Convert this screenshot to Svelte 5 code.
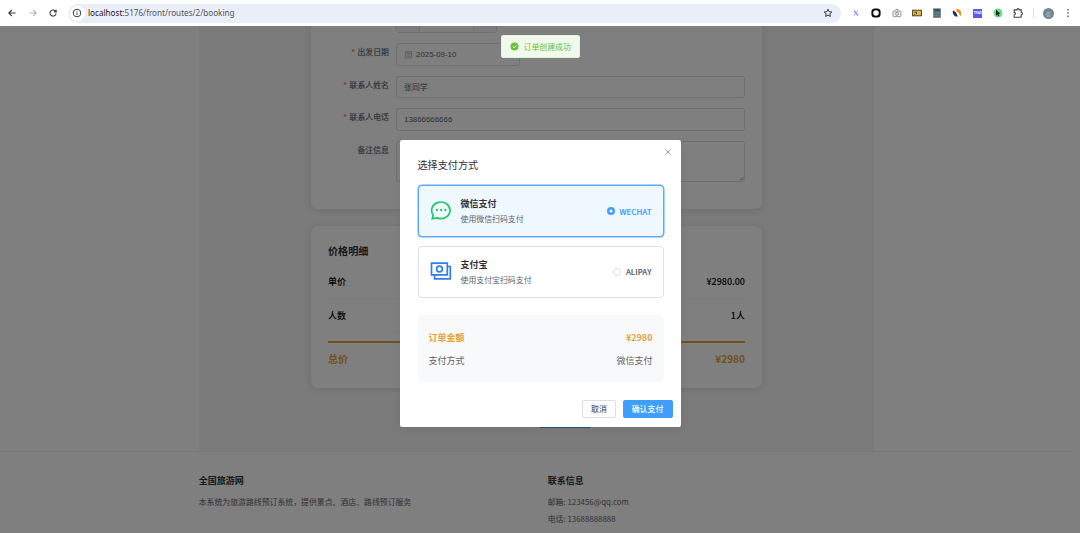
<script lang="ts">
type Payment = { id: string; name: string; hint: string };

const payments: Payment[] = [
  { id: 'WECHAT', name: '微信支付', hint: '使用微信扫码支付' },
  { id: 'ALIPAY', name: '支付宝', hint: '使用支付宝扫码支付' },
];

const fields = [
  { label: '联系人姓名', value: '张同学' },
  { label: '联系人电话', value: '13866666666' },
];

let selected = $state('WECHAT');
const selectedName = $derived(payments.find((p) => p.id === selected)?.name);
</script>

<div class="browser">
	<header class="toolbar">
		<nav class="nav">
			<svg viewBox="0 0 10 10"><path d="M8.5 5H1.8M4.8 2 1.8 5l3 3" /></svg>
			<svg class="faded" viewBox="0 0 10 10"><path d="M1.5 5h6.7M5.2 2l3 3-3 3" /></svg>
			<svg viewBox="0 0 10 10"><path d="M7.8 3.6A3.1 3.1 0 1 0 8.1 5.6M8.2 1.7v2.2H6" /></svg>
		</nav>
		<div class="address">
			<span class="info">
				<svg viewBox="0 0 10 10"><circle cx="5" cy="5" r="3.8" /><path d="M5 4.6v2.3M5 2.8v.9" /></svg>
			</span>
			<span class="url"><b>localhost:</b>5176/front/routes/2/booking</span>
			<svg class="star" viewBox="0 0 10 10"><path d="m5 1.2 1.1 2.5 2.8.3-2.1 1.8.6 2.7L5 7.1 2.6 8.5l.6-2.7L1.1 4l2.8-.3z" /></svg>
		</div>
		<div class="extensions">
			<svg viewBox="0 0 12 12"><path d="M4 3.7 8 8.5" stroke="#7d8ff0" stroke-width="1.3" /><path d="M8 3.7 6.3 5.6" stroke="#45c5c9" /><path d="M5.5 6.8 4 8.5" stroke="#b66be0" /></svg>
			<svg viewBox="0 0 12 12"><rect x="1.4" y="1.4" width="9.2" height="9.2" rx="3.5" fill="#0a0a0a" /><circle cx="6" cy="6" r="2.8" fill="#fff" /></svg>
			<svg viewBox="0 0 12 12"><rect x="2" y="4" width="8" height="5.6" rx=".7" stroke="#999" fill="#eee" /><path d="M4.4 3.4 5 2.3h2l.6 1.1" stroke="#999" /><circle cx="6" cy="6.7" r="1.5" stroke="#888" /></svg>
			<svg viewBox="0 0 12 12"><rect x="1.6" y="3.2" width="8.8" height="5.6" fill="#e9b93c" stroke="#4b4330" /><path d="M3.5 5.2h2v2M3.2 7.4h1" stroke="#4b4330" /></svg>
			<svg viewBox="0 0 12 12"><rect x="2.2" y="1.4" width="7.6" height="9.4" fill="#546b79" /><path d="M3.3 3.2h5.4" stroke="#35434d" stroke-width="1.4" /><path d="M3.3 6h5.4M3.3 8.6h3" stroke="#8fa0aa" stroke-dasharray="1 1" /><path d="M7.5 8.8h1.4" stroke="#c65b4c" /></svg>
			<svg viewBox="0 0 12 12"><path d="M2 3.2l3 2.3 1.8 4C3.9 10.3 1 7 2 3.2z" fill="#20285c" /><path d="M5.3 2c3.7-.8 6.5 3.500 4 7.200L7.600 5.800 5.500 4.500z" fill="#f48b17" /></svg>
			<span class="tag">TRAX</span>
			<svg viewBox="0 0 12 12"><circle cx="6" cy="6" r="4.5" fill="#6edb93" /><path d="m4 2.7 4.4 4.2-2 .2 1 2-1 .5-1-2-1.4 1.2z" fill="#152218" /></svg>
			<svg viewBox="0 0 12 12"><path d="M2.2 2.9H5c0-1.7 2.2-1.7 2.2 0h2v2.6c1.7 0 1.7 2.2 0 2.2v2.6h-7V7.8c1.7 0 1.7-2.4 0-2.4z" stroke="#444" stroke-width="1.1" /></svg>
		</div>
		<i class="divider"></i>
		<span class="avatar">倍</span>
		<svg class="dots" viewBox="0 0 4 12"><circle cx="2" cy="2.8" r=".8" /><circle cx="2" cy="6" r=".8" /><circle cx="2" cy="9.2" r=".8" /></svg>
	</header>

	<div class="viewport">
		<main>
			<section class="card form">
				<div class="row">
					<span class="label"></span>
					<div class="stepper"><i></i><b></b><i></i></div>
				</div>
				<div class="row">
					<span class="label required">出发日期</span>
					<div class="input date">
						<svg viewBox="0 0 10 10"><path d="M1.5 2h7v6.8h-7zM1.5 4h7M3.3 1v1.6M6.7 1v1.6M3.2 5.6h3.6M3.2 7.2h3.6" /></svg>
						2025-09-10
					</div>
				</div>
				{#each fields as field}
					<div class="row">
						<span class="label required">{field.label}</span>
						<div class="input">{field.value}</div>
					</div>
				{/each}
				<div class="row">
					<span class="label">备注信息</span>
					<div class="input textarea">
						<svg viewBox="0 0 6 6"><path d="M1 5.5 5.5 1M3.5 5.5l2-2" /></svg>
					</div>
				</div>
			</section>

			<section class="card price">
				<h3>价格明细</h3>
				<div class="price-row"><span>单价</span><span>¥2980.00</span></div>
				<div class="price-row"><span>人数</span><span>1人</span></div>
				<div class="price-row total"><span>总价</span><span>¥2980</span></div>
			</section>
			<button type="button" class="submit" aria-label="提交订单"></button>
		</main>

		<footer>
			<div class="footer-inner">
				<div>
					<h4>全国旅游网</h4>
					<p>本系统为旅游路线预订系统，提供景点、酒店、路线预订服务</p>
				</div>
				<div>
					<h4>联系信息</h4>
					<p>邮箱: 123456@qq.com</p>
					<p>电话: 13688888888</p>
				</div>
			</div>
		</footer>

		<div class="overlay">
			<div class="dialog" role="dialog" aria-modal="true">
				<button type="button" class="close" aria-label="关闭">
					<svg viewBox="0 0 8 8"><path d="m1.3 1.3 5.4 5.4M6.7 1.3 1.3 6.7" /></svg>
				</button>
				<h2>选择支付方式</h2>
				<div class="options">
					{#each payments as payment}
						<button
							type="button"
							class="option"
							class:active={selected === payment.id}
							onclick={() => (selected = payment.id)}
						>
							{#if payment.id === 'WECHAT'}
								<svg class="brand wechat" viewBox="0 0 22 22">
									<path d="M2.3 18.700l.9-3.700A9.200 8.300 0 1 1 7 17.900z" />
									<circle cx="7" cy="10" r="1.15" /><circle cx="11.2" cy="10" r="1.15" /><circle cx="15.4" cy="10" r="1.15" />
								</svg>
							{:else}
								<svg class="brand alipay" viewBox="0 0 22 22">
									<path d="M1.500 2.200h15.800v11.600H1.500zM17.300 5.500h3v12.300H4.600v-4" />
									<circle cx="9.500" cy="8" r="2.9" />
								</svg>
							{/if}
							<span class="about">
								<strong>{payment.name}</strong>
								<small>{payment.hint}</small>
							</span>
							<i class="radio"></i>
							<span class="code">{payment.id}</span>
						</button>
					{/each}
				</div>
				<div class="summary">
					<div class="amount"><span>订单金额</span><span>¥2980</span></div>
					<div><span>支付方式</span><span>{selectedName}</span></div>
				</div>
				<div class="actions">
					<button type="button" class="btn">取消</button>
					<button type="button" class="btn primary">确认支付</button>
				</div>
			</div>
		</div>

		<div class="toast" role="status">
			<svg viewBox="0 0 10 10"><circle cx="5" cy="5" r="4.4" /><path d="m3 5.1 1.5 1.4L7.1 3.8" /></svg>
			订单创建成功
		</div>
	</div>
</div>

<style>
	:global(body) {
		margin: 0;
	}

	.browser {
		height: 533px;
		display: flex;
		flex-direction: column;
		overflow: hidden;
		font-family: 'Noto Sans CJK SC', sans-serif;
		font-size: 7.9px;
		color: #303133;
	}

	.browser * {
		box-sizing: border-box;
	}

	svg {
		display: block;
		flex: none;
		fill: none;
		stroke: currentColor;
	}

	button {
		font: inherit;
		color: inherit;
		padding: 0;
		margin: 0;
	}

	h2,
	h3,
	h4,
	p {
		margin: 0;
	}

	/* Browser toolbar */
	.toolbar {
		height: 26px;
		flex: none;
		display: flex;
		align-items: center;
		background: #fff;
		color: #3c3d40;
	}

	.nav {
		display: flex;
		gap: 10.5px;
		width: 68px;
		padding-left: 7px;
	}

	.nav svg {
		width: 10px;
		height: 10px;
		stroke-width: 1.1;
	}

	.nav .faded {
		color: #b4b6b9;
	}

	.address {
		width: 773px;
		height: 19px;
		border-radius: 10px;
		background: #e9eef9;
		display: flex;
		align-items: center;
		padding: 0 8px 0 1.5px;
	}

	.info {
		width: 15px;
		height: 15px;
		border-radius: 50%;
		background: #fff;
		display: grid;
		place-items: center;
		margin-right: 3.5px;
	}

	.info svg,
	.star {
		width: 10px;
		height: 10px;
	}

	.url {
		flex: 1;
		font: 8.15px/12px 'Noto Sans', sans-serif;
		color: #55575b;
	}

	.url b {
		font-weight: 400;
		color: #1f2023;
	}

	.extensions {
		display: flex;
		align-items: center;
		gap: 8.3px;
		margin-left: 9px;
	}

	.extensions svg {
		width: 12px;
		height: 12px;
		stroke: none;
	}

	.tag {
		width: 9px;
		height: 9px;
		margin: 0 1.5px;
		background: #6257f5;
		color: #fff;
		font: 700 3px/9px 'Liberation Sans', sans-serif;
		text-align: center;
	}

	.divider {
		width: 1px;
		height: 9px;
		margin-left: 8.5px;
		background: #d3dff5;
	}

	.avatar {
		width: 11px;
		height: 11px;
		margin: 0 12px 0 9px;
		border-radius: 50%;
		background: #708690;
		color: #c5d0d4;
		font-size: 5px;
		line-height: 11px;
		text-align: center;
	}

	.dots {
		width: 4px;
		height: 12px;
		fill: #3c3d40;
		stroke: none;
	}

	/* Page, with the scrollbar gutter on the right */
	.viewport {
		position: relative;
		flex: 1;
		overflow: hidden;
		padding-right: 7px;
		background: #fff;
	}

	main {
		width: 675px;
		height: 425px;
		margin: 0 auto;
		padding: 0 112px;
		background: #f4f4f5;
		overflow: hidden;
	}

	.card {
		width: 451px;
		background: #fff;
		border-radius: 7px;
		box-shadow: 0 1px 7px rgba(0, 0, 0, 0.1);
		padding: 17px;
	}

	.form {
		height: 215.5px;
		margin-top: -32.5px;
		display: flex;
		flex-direction: column;
		gap: 10.1px;
	}

	.row {
		display: flex;
		min-height: 22.5px;
	}

	.label {
		width: 68px;
		padding-right: 7px;
		line-height: 18.5px;
		text-align: right;
		color: #606266;
		-webkit-text-stroke: 0.15px currentColor;
	}

	.required::before {
		content: '*';
		color: #f56c6c;
		margin-right: 2.5px;
	}

	.input {
		flex: 1;
		display: flex;
		align-items: center;
		height: 22.5px;
		border: 1px solid #dcdfe6;
		border-radius: 2.5px;
		padding: 0 7px;
		font-family: 'Liberation Sans', 'Noto Sans CJK SC', sans-serif;
		color: #606266;
	}

	.date {
		flex: none;
		width: 124px;
		gap: 3px;
	}

	.date svg {
		width: 9px;
		height: 9px;
		stroke: #a8abb2;
		stroke-width: 0.8;
	}

	.textarea {
		height: 41px;
		padding: 0;
		align-items: flex-end;
		justify-content: flex-end;
	}

	.textarea svg {
		width: 5px;
		height: 5px;
		stroke-width: 0.7;
	}

	.stepper {
		display: flex;
		width: 101px;
		height: 22.5px;
		border: 1px solid #dcdfe6;
		border-radius: 2.5px;
	}

	.stepper i {
		width: 22px;
		background: #f5f7fa;
	}

	.stepper b {
		flex: 1;
		border: solid #dcdfe6;
		border-width: 0 1px;
	}

	.price {
		height: 162.5px;
		margin-top: 16.5px;
	}

	.price h3 {
		font-size: 10.1px;
		line-height: 16px;
		font-weight: 600;
		margin-bottom: 7px;
	}

	.price-row {
		display: flex;
		justify-content: space-between;
		align-items: center;
		height: 33.7px;
		font-size: 9px;
		font-weight: 500;
		color: #000;
		border-bottom: 1px solid #f8f8f8;
	}

	.price-row.total {
		height: 34px;
		margin-top: 8px;
		border-top: 2px solid #e6a23c;
		border-bottom: none;
		font-size: 10.1px;
		font-weight: 700;
		color: #e6a23c;
	}

	.submit {
		display: block;
		width: 52px;
		height: 23px;
		margin: 17px 0 0 228px;
		border: none;
		border-radius: 2px;
		background: #409eff;
	}

	footer {
		height: 90px;
		border-top: 1px solid #f0f0f0;
		background: #fff;
	}

	.footer-inner {
		width: 675.5px;
		margin: 0 auto;
		display: grid;
		grid-template-columns: 1fr 1fr;
		gap: 22.5px;
		padding-top: 21px;
	}

	h4 {
		font-size: 9px;
		line-height: 16px;
		font-weight: 700;
		margin-bottom: 4px;
	}

	footer p {
		font-size: 7.88px;
		line-height: 17px;
		color: #606266;
	}

	/* Payment dialog */
	.overlay {
		position: absolute;
		inset: 0;
		background: rgba(0, 0, 0, 0.5);
	}

	.dialog {
		position: relative;
		width: 281px;
		height: 287px;
		margin: 113.5px 0 0 400px;
		padding: 16.5px 17.5px 9px;
		border-radius: 2px;
		background: #fff;
		box-shadow: 0 2px 8px rgba(0, 0, 0, 0.06);
	}

	.close {
		position: absolute;
		top: 8.5px;
		right: 9.5px;
		border: none;
		background: none;
		color: #909399;
	}

	.close svg {
		width: 8px;
		height: 8px;
		stroke-width: 0.9;
	}

	h2 {
		font-size: 10.15px;
		line-height: 18px;
		font-weight: 400;
		color: #303133;
	}

	.options {
		display: grid;
		gap: 8.5px;
		margin-top: 11px;
	}

	.option {
		display: flex;
		align-items: center;
		height: 52px;
		padding: 0 11px;
		border: 1px solid #dfe1e6;
		border-radius: 4px;
		background: #fff;
		text-align: left;
	}

	.option.active {
		border-color: #5aabff;
		background: #f0f8ff;
		box-shadow: 0 0 0 0.5px #5aabff;
	}

	.brand {
		width: 22px;
		height: 22px;
		stroke-width: 1.7;
		margin-right: 9px;
	}

	.wechat {
		color: #20c76b;
	}

	.wechat circle {
		fill: currentColor;
		stroke: none;
	}

	.alipay {
		color: #2f7df6;
	}

	.about {
		flex: 1;
		display: flex;
		flex-direction: column;
		line-height: 15px;
	}

	.about strong {
		font-size: 9px;
		color: #303133;
	}

	.about small {
		font-size: 7.9px;
		color: #606266;
	}

	.radio {
		width: 8px;
		height: 8px;
		margin-right: 4.5px;
		border: 1px solid #dcdfe6;
		border-radius: 50%;
	}

	.active .radio {
		border: none;
		background: radial-gradient(circle, #fff 1.2px, #409eff 1.8px);
	}

	.code {
		font-size: 7.9px;
		font-weight: 500;
		color: #606266;
		-webkit-text-stroke: 0.15px currentColor;
	}

	.active .code {
		color: #409eff;
	}

	.summary {
		margin-top: 17.5px;
		height: 66.5px;
		border-radius: 4.5px;
		background: #f8f9fb;
		padding: 12px 11px 11px;
		font-size: 9px;
		color: #606266;
	}

	.summary div {
		display: flex;
		justify-content: space-between;
		line-height: 22.5px;
	}

	.summary .amount {
		font-weight: 700;
		color: #e6a23c;
	}

	.actions {
		display: flex;
		justify-content: flex-end;
		gap: 6.5px;
		margin: 18px -9px 0 0;
	}

	.btn {
		width: 34px;
		height: 18px;
		border: 1px solid #dcdfe6;
		border-radius: 2px;
		background: #fff;
		font-size: 7.9px;
		font-weight: 500;
		line-height: 14px;
		color: #606266;
	}

	.btn.primary {
		width: 50px;
		border-color: #409eff;
		background: #409eff;
		color: #fff;
	}

	.toast {
		position: absolute;
		top: 9px;
		left: 501px;
		width: 79px;
		height: 23px;
		display: flex;
		align-items: center;
		gap: 4.5px;
		padding: 0 8px;
		border: 1px solid #e1f3d8;
		border-radius: 2px;
		background: #f0f9eb;
		color: #67c23a;
		white-space: nowrap;
	}

	.toast svg {
		width: 9px;
		height: 9px;
	}

	.toast circle {
		fill: #67c23a;
		stroke: none;
	}

	.toast path {
		stroke: #fff;
	}
</style>
